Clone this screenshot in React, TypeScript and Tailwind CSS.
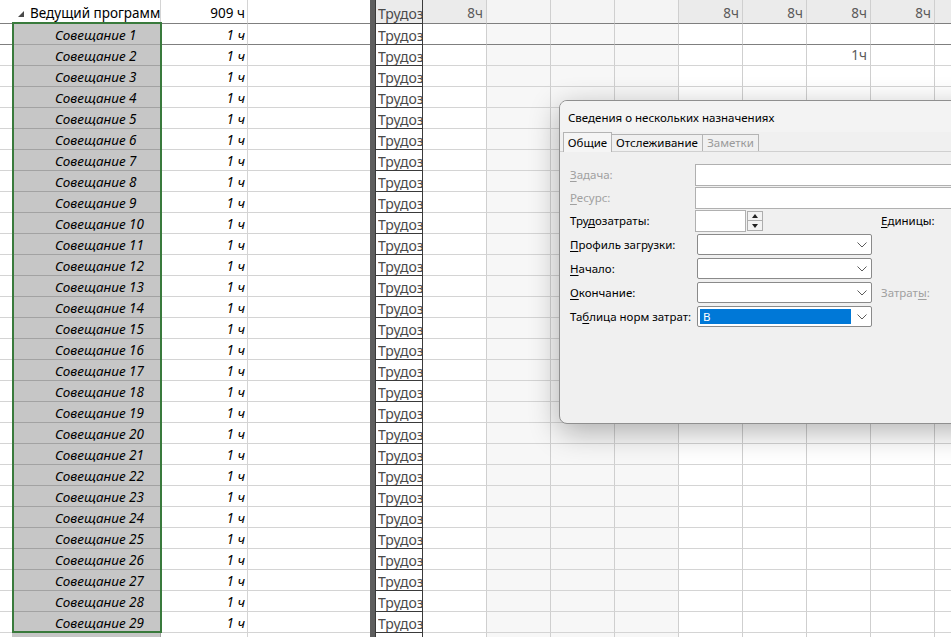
import React from "react";

const rows = Array.from({ length: 30 }, (_, i) => i + 1);
const timeCols = Array.from({ length: 9 }, (_, i) => i);
const headerHours = [0, 4, 5, 6, 7];

const isWeekend = (c: number) => c >= 1 && c <= 3;

function Chevron() {
  return (
    <svg width="10" height="6" viewBox="0 0 10 6" className="shrink-0">
      <polyline points="0.5,0.5 5,5 9.5,0.5" fill="none" stroke="#5c5c5c" strokeWidth="1" />
    </svg>
  );
}

// clipped "Трудозатраты" cell text, as in the narrow column
function WorkLabel() {
  return (
    <span className="block w-full overflow-hidden whitespace-nowrap">Трудозатраты</span>
  );
}

function HeaderRow() {
  return (
    <div className="flex h-[24px] shrink-0">
      <div className="w-[12px] shrink-0 border-b border-[#7f7f7f]" />
      <div className="w-[149px] shrink-0 flex items-center pl-[6px] pt-[4px] overflow-hidden whitespace-nowrap border-b border-r border-b-[#7f7f7f] border-r-[#d4d4d4]">
        <svg width="6" height="6" viewBox="0 0 6 6" className="shrink-0">
          <polygon points="6,0 6,6 0,6" fill="#4a4a4a" />
        </svg>
        <span className="ml-[6px]">Ведущий программист</span>
      </div>
      <div className="w-[87px] shrink-0 flex items-center justify-end pr-[2px] pt-[4px] border-b border-r border-b-[#7f7f7f] border-r-[#d4d4d4]">
        909 ч
      </div>
      <div className="w-[122px] shrink-0 border-b border-[#7f7f7f]" />
      <div className="w-[5px] shrink-0 bg-[#5e5e5e]" />
      <div className="w-[48px] shrink-0 flex items-center pl-[2px] pt-[3px] overflow-hidden border-x border-b border-[#3a3a3a] bg-[#ebebeb] text-[#4a4a4a] text-[14px]">
        <WorkLabel />
      </div>
      {timeCols.map((c) => (
        <div
          key={c}
          className={
            isWeekend(c)
              ? "w-[64px] shrink-0 border-r border-b border-r-[#cfcfcf] border-b-[#7f7f7f] bg-[#f4f4f4]"
              : "w-[64px] shrink-0 flex items-center justify-end pr-[3px] pt-[3px] border-r border-b border-r-[#cfcfcf] border-b-[#7f7f7f] bg-[#ebebeb] text-[#5a5a5a]"
          }
        >
          {headerHours.includes(c) ? "8ч" : ""}
        </div>
      ))}
    </div>
  );
}

function BodyRow({ n }: { n: number }) {
  const dark = n === 1;
  const line = dark ? "border-[#7f7f7f]" : "border-[#d4d4d4]";
  return (
    <div className="flex h-[21px] shrink-0">
      <div className={`w-[12px] shrink-0 border-b ${line}`} />
      <div className="w-[149px] shrink-0 flex items-center pl-[43px] pt-[3px] italic whitespace-nowrap bg-[#c6c6c6] border-b border-r border-[#a2a2a2]">
        Совещание {n}
      </div>
      <div
        className={
          dark
            ? "w-[87px] shrink-0 flex items-center justify-end pr-[2px] pt-[3px] italic border-b border-r border-b-[#7f7f7f] border-r-[#d4d4d4]"
            : "w-[87px] shrink-0 flex items-center justify-end pr-[2px] pt-[3px] italic border-b border-r border-[#d4d4d4]"
        }
      >
        1 ч
      </div>
      <div className={`w-[122px] shrink-0 border-b ${line}`} />
      <div className="w-[5px] shrink-0 bg-[#5e5e5e]" />
      <div className="w-[48px] shrink-0 flex items-center pl-[2px] pt-[2px] overflow-hidden border-x border-b border-[#3a3a3a] text-[#4a4a4a] text-[14px]">
        <WorkLabel />
      </div>
      {timeCols.map((c) => (
        <div
          key={c}
          className={
            (isWeekend(c) ? "bg-[#f7f7f7] " : "bg-white ") +
            (dark
              ? "w-[64px] shrink-0 flex items-center justify-end pr-[3px] pt-[1px] border-r border-b border-r-[#cfcfcf] border-b-[#7f7f7f] text-[#5a5a5a]"
              : "w-[64px] shrink-0 flex items-center justify-end pr-[3px] pt-[1px] border-r border-b border-r-[#cfcfcf] border-b-[#d4d4d4] text-[#5a5a5a]")
          }
        >
          {n === 2 && c === 6 ? "1ч" : ""}
        </div>
      ))}
    </div>
  );
}

function Label({
  before,
  u,
  after,
  disabled,
}: {
  before?: string;
  u: string;
  after: string;
  disabled?: boolean;
}) {
  return (
    <span className={disabled ? "text-[#a0a0a0] whitespace-nowrap" : "text-black whitespace-nowrap"}>
      {before}
      <u className="underline-offset-2">{u}</u>
      {after}
    </span>
  );
}

function Combo({ value }: { value?: string }) {
  return (
    <div className="ml-[2px] w-[175px] h-[21px] flex items-center pr-[4px] bg-white border border-[#8a8a8a] rounded-[2px]">
      <div className="flex-1 h-full p-[2px]">
        {value && (
          <div className="w-[151px] h-full bg-[#0078d7] text-white pl-[3px] flex items-center leading-none">
            {value}
          </div>
        )}
      </div>
      <Chevron />
    </div>
  );
}

function Dialog() {
  return (
    <div className="absolute left-[559px] top-[100px] w-[440px] h-[324px] rounded-[8px] border border-[#8f8f8f] bg-[#f0f0f0] shadow-[0_8px_30px_rgba(0,0,0,0.3)] overflow-hidden text-[11.5px] text-black">
      <div className="h-[31px] bg-[#f3f3f3] pl-[8px] flex items-center pt-[2px]">
        Сведения о нескольких назначениях
      </div>
      <div className="h-[20px] flex items-end pl-[3px] border-b border-[#d0d0d0]">
        <div className="h-[20px] w-[49px] flex items-center justify-center bg-[#f5f5f5] border-t border-x border-[#b4b4b4] -mb-px">
          Общие
        </div>
        <div className="h-[17px] w-[91px] flex items-center justify-center border-t border-r border-[#b4b4b4]">
          Отслеживание
        </div>
        <div className="h-[17px] w-[56px] flex items-center justify-center border-t border-r border-[#b4b4b4] text-[#9a9a9a]">
          Заметки
        </div>
      </div>
      <div className="pl-[10px] pt-[12px] flex flex-col">
        <div className="h-[22px] flex items-center">
          <div className="w-[125px] shrink-0">
            <Label u="З" after="адача:" disabled />
          </div>
          <div className="flex-1 h-full bg-white border border-[#b0b0b0]" />
        </div>
        <div className="mt-[1px] h-[22px] flex items-center">
          <div className="w-[125px] shrink-0">
            <Label u="Р" after="есурс:" disabled />
          </div>
          <div className="flex-1 h-full bg-white border border-[#b0b0b0]" />
        </div>
        <div className="mt-[1px] h-[22px] flex items-center">
          <div className="w-[125px] shrink-0">
            <Label before="Тру" u="д" after="озатраты:" />
          </div>
          <div className="w-[51px] h-full bg-white border border-[#b0b0b0]" />
          <div className="ml-[1px] w-[16px] h-[20px] flex flex-col">
            <div className="h-[10px] flex items-center justify-center bg-[#f3f3f3] border border-[#adadad]">
              <svg width="6" height="4" viewBox="0 0 6 4">
                <polygon points="3,0 6,4 0,4" fill="#222" />
              </svg>
            </div>
            <div className="h-[10px] flex items-center justify-center bg-[#f3f3f3] border border-t-0 border-[#adadad]">
              <svg width="6" height="4" viewBox="0 0 6 4">
                <polygon points="0,0 6,0 3,4" fill="#222" />
              </svg>
            </div>
          </div>
          <div className="ml-[118px]">
            <Label u="Е" after="диницы:" />
          </div>
        </div>
        <div className="mt-[2px] h-[21px] flex items-center">
          <div className="w-[125px] shrink-0">
            <Label u="П" after="рофиль загрузки:" />
          </div>
          <Combo />
        </div>
        <div className="mt-[3px] h-[21px] flex items-center">
          <div className="w-[125px] shrink-0">
            <Label u="Н" after="ачало:" />
          </div>
          <Combo />
        </div>
        <div className="mt-[3px] h-[21px] flex items-center">
          <div className="w-[125px] shrink-0">
            <Label u="О" after="кончание:" />
          </div>
          <Combo />
          <div className="ml-[9px]">
            <Label before="Затрат" u="ы" after=":" disabled />
          </div>
        </div>
        <div className="mt-[3px] h-[21px] flex items-center">
          <div className="w-[125px] shrink-0">
            <Label before="Та" u="б" after="лица норм затрат:" />
          </div>
          <Combo value="B" />
        </div>
      </div>
    </div>
  );
}

export default function App() {
  return (
    <div className="relative w-[951px] h-[637px] overflow-hidden bg-white text-[13.5px] text-black font-['Noto_Sans',sans-serif]">
      <div className="flex flex-col w-[1100px]">
        <HeaderRow />
        {rows.map((n) => (
          <BodyRow key={n} n={n} />
        ))}
      </div>
      <div className="absolute left-[12px] top-[22px] w-[150px] h-[611px] border-2 border-[#397a3c] pointer-events-none" />
      <Dialog />
    </div>
  );
}
